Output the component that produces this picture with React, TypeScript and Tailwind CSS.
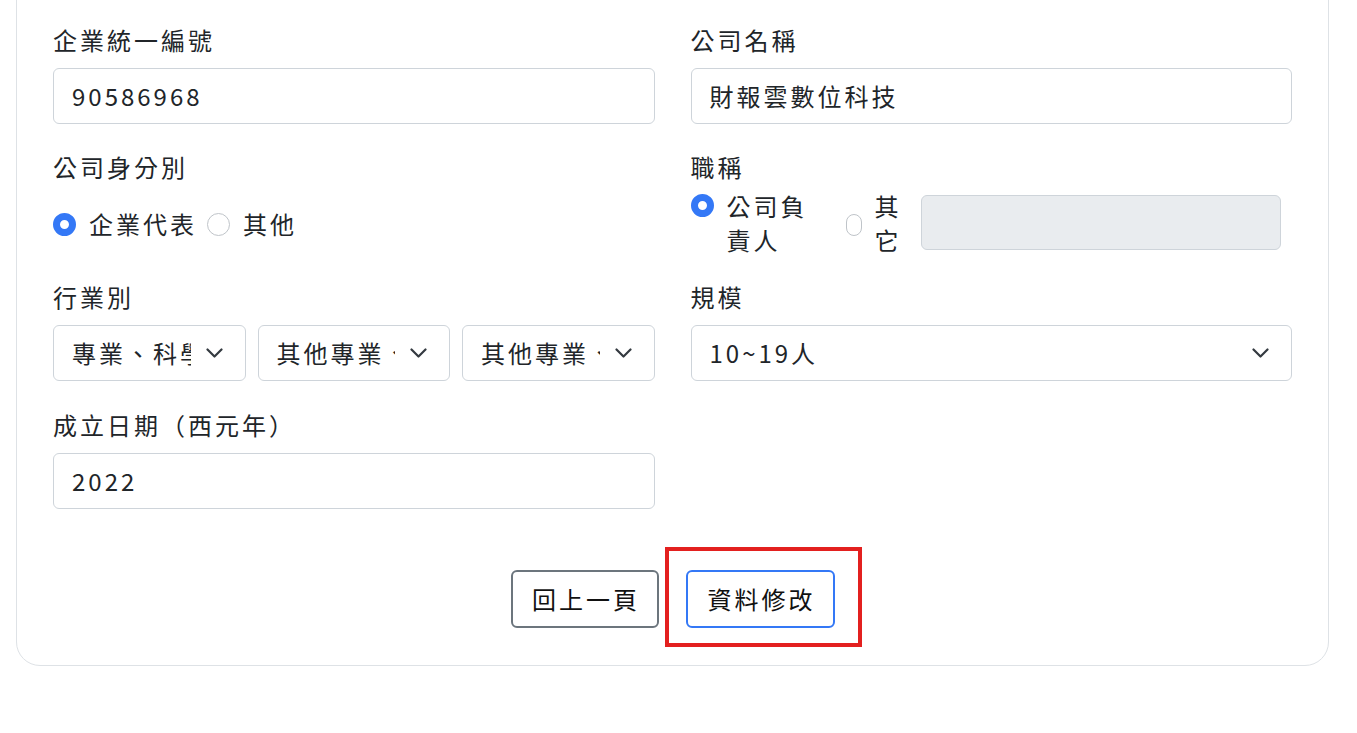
import React from 'react';

const font = { fontFamily: '"Noto Sans CJK TC", "Noto Sans", sans-serif' };

const Label = ({ children, className = '' }: { children: React.ReactNode; className?: string }) => (
  <div className={`text-[24px] leading-[33px] tracking-[3px] text-[#212529] ${className}`}>{children}</div>
);

const TextInput = ({ value }: { value: string }) => (
  <div className="h-[56px] w-full rounded-[6px] border border-[#ced4da] bg-white pl-[18px] flex items-center text-[24px] tracking-[3px] text-[#212529]">
    {value}
  </div>
);

const Chevron = () => (
  <svg width="17" height="10" viewBox="0 0 17 10" fill="none" className="absolute right-[22px] top-1/2 -translate-y-1/2">
    <path d="M1.5 1.5l7 7 7-7" stroke="#343a40" strokeWidth="2.2" strokeLinecap="round" strokeLinejoin="round" />
  </svg>
);

const Select = ({ value, className = '' }: { value: string; className?: string }) => (
  <div className={`relative h-[56px] min-w-0 rounded-[6px] border border-[#ced4da] bg-white pl-[18px] pr-[54px] flex items-center ${className}`}>
    <div className="min-w-0 overflow-hidden whitespace-nowrap text-[24px] tracking-[3px] text-[#212529]">{value}</div>
    <Chevron />
  </div>
);

const RadioOn = ({ className = '' }: { className?: string }) => (
  <span className={`block w-[23px] h-[23px] shrink-0 rounded-full border-[7px] border-[#3478f6] bg-white ${className}`} />
);

const RadioOff = ({ className = '' }: { className?: string }) => (
  <span className={`block shrink-0 rounded-full border border-[#bfc4c9] bg-white ${className}`} />
);

export default function App() {
  return (
    <div style={font} className="min-h-[733px] bg-white pl-[16px] pr-[28px] pb-[68px]">
      <div className="-mt-[40px] rounded-[24px] border border-[#dee2e6] bg-white px-[36px] pt-[62px] pb-[37px]">
        {/* row 1 */}
        <div className="grid grid-cols-2 gap-x-[36px]">
          <div>
            <Label className="mb-[12px]">企業統一編號</Label>
            <TextInput value="90586968" />
          </div>
          <div>
            <Label className="mb-[12px]">公司名稱</Label>
            <TextInput value="財報雲數位科技" />
          </div>
        </div>

        {/* row 2 */}
        <div className="mt-[26px] grid grid-cols-2 gap-x-[36px]">
          <div>
            <Label className="mb-[7px]">公司身分別</Label>
            <div className="flex h-[68px] items-center text-[24px] tracking-[3px] text-[#212529]">
              <RadioOn />
              <span className="ml-[13px]">企業代表</span>
              <RadioOff className="ml-[10px] w-[23px] h-[23px]" />
              <span className="ml-[13px]">其他</span>
            </div>
          </div>
          <div>
            <Label className="mb-[7px]">職稱</Label>
            <div className="flex h-[68px] items-center text-[24px] leading-[34px] tracking-[3px] text-[#212529]">
              <div className="flex items-start self-stretch">
                <RadioOn className="mt-[4px]" />
                <span className="ml-[13px] -mt-[1px] w-[92px]">公司負責人</span>
              </div>
              <RadioOff className="ml-[27px] w-[16px] h-[22px] mt-[2px]" />
              <span className="ml-[13px] -mt-[2px] w-[32px]">其它</span>
              <div className="ml-[14px] h-[55px] w-[360px] rounded-[6px] border border-[#ced4da] bg-[#e9ecef] -mt-[4px]" />
            </div>
          </div>
        </div>

        {/* row 3 */}
        <div className="mt-[22px] grid grid-cols-2 gap-x-[36px]">
          <div>
            <Label className="mb-[12px]">行業別</Label>
            <div className="grid grid-cols-3 gap-x-[12px]">
              <Select value="專業、科學及技術服務業" />
              <Select value="其他專業、科學及技術服務業" />
              <Select value="其他專業、科學及技術服務業" />
            </div>
          </div>
          <div>
            <Label className="mb-[12px]">規模</Label>
            <Select value="10~19人" />
          </div>
        </div>

        {/* row 4 */}
        <div className="mt-[27px] grid grid-cols-2 gap-x-[36px]">
          <div>
            <Label className="mb-[12px]">成立日期（西元年）</Label>
            <TextInput value="2022" />
          </div>
        </div>

        {/* buttons */}
        <div className="mt-[61px] flex justify-center gap-[27px]">
          <button className="h-[58px] w-[148px] rounded-[6px] border-[2.5px] border-[#6c757d] bg-white pl-[3px] text-[24px] tracking-[3px] text-[#111]">
            回上一頁
          </button>
          <span className="relative block">
            <button className="h-[58px] w-[149px] rounded-[6px] border-[2.5px] border-[#3478f6] bg-white pl-[3px] text-[24px] tracking-[3px] text-[#111]">
              資料修改
            </button>
            <span className="pointer-events-none absolute -left-[21px] -right-[27px] -top-[23px] -bottom-[19px] border-[4px] border-[#e3201f]" />
          </span>
        </div>
      </div>
    </div>
  );
}
